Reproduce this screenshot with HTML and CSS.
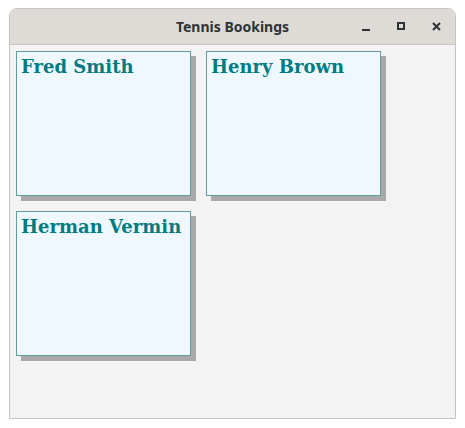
FILE: index.html
```html
<!DOCTYPE html>
<html lang="en">
<head>
    <meta charset="UTF-8">
    <meta name="viewport" content="width=device-width, initial-scale=1.0">
    <title>Tennis Bookings</title>
    <link rel="stylesheet" href="styles.css">
</head>
<body>
    <div class="window">
        <div class="titlebar">
            <span class="title">Tennis Bookings</span>
            <div class="controls">
                <span class="ctl ctl-min"></span>
                <span class="ctl ctl-max"></span>
                <span class="ctl ctl-close">
                    <svg width="9" height="9" viewBox="0 0 9 9">
                        <path d="M1 1 L8 8 M8 1 L1 8" stroke="#2e3436" stroke-width="2"/>
                    </svg>
                </span>
            </div>
        </div>

        <div class="content">
            <div class="card"><h2>Fred Smith</h2></div>
            <div class="card"><h2>Henry Brown</h2></div>
            <div class="card"><h2>Herman Vermin</h2></div>
        </div>
    </div>
</body>
</html>
```

FILE: styles.css
```css
body {
    margin: 0;
    background: white;
}
.window {
    margin: 8px 0 0 9px;
    width: 447px;
    height: 411px;
    box-sizing: border-box;
    border: 1px solid #c4c4c4;
    border-radius: 8px 8px 0 0;
    background-color: #f3f3f3;
    display: flex;
    flex-direction: column;
    overflow: hidden;
}
.titlebar {
    height: 35px;
    flex-shrink: 0;
    background-color: #dedbd7;
    border-bottom: 1px solid #c9c5c1;
    position: relative;
    display: flex;
    align-items: center;
    justify-content: center;
}
.title {
    font-family: "Noto Sans", "DejaVu Sans", sans-serif;
    font-weight: bold;
    font-size: 14px;
    color: #2e3436;
}
.controls {
    position: absolute;
    right: 14px;
    top: 13px;
    display: flex;
    gap: 26px;
}
.ctl {
    width: 9px;
    height: 9px;
    position: relative;
    display: block;
}
.ctl-min::after {
    content: "";
    position: absolute;
    left: 0;
    bottom: 0;
    width: 8px;
    height: 2px;
    background: #2e3436;
}
.ctl-max::after {
    content: "";
    position: absolute;
    left: 0;
    top: 0;
    width: 4px;
    height: 4px;
    border: 2px solid #2e3436;
}
.ctl-close svg {
    display: block;
}
.content {
    flex: 1;
    padding: 6px;
    display: flex;
    flex-wrap: wrap;
    align-content: flex-start;
    gap: 15px;
}
.card {
    width: 175px;
    height: 145px;
    box-sizing: border-box;
    background-color: #f0f8ff;
    border: 1px solid #5f9ea0;
    box-shadow: 5px 5px 0 #a9a9a9;
    padding: 4px 4px;
}
.card h2 {
    margin: 0;
    font-family: "DejaVu Serif", serif;
    font-size: 18px;
    font-weight: bold;
    color: #007b80;
}
```
